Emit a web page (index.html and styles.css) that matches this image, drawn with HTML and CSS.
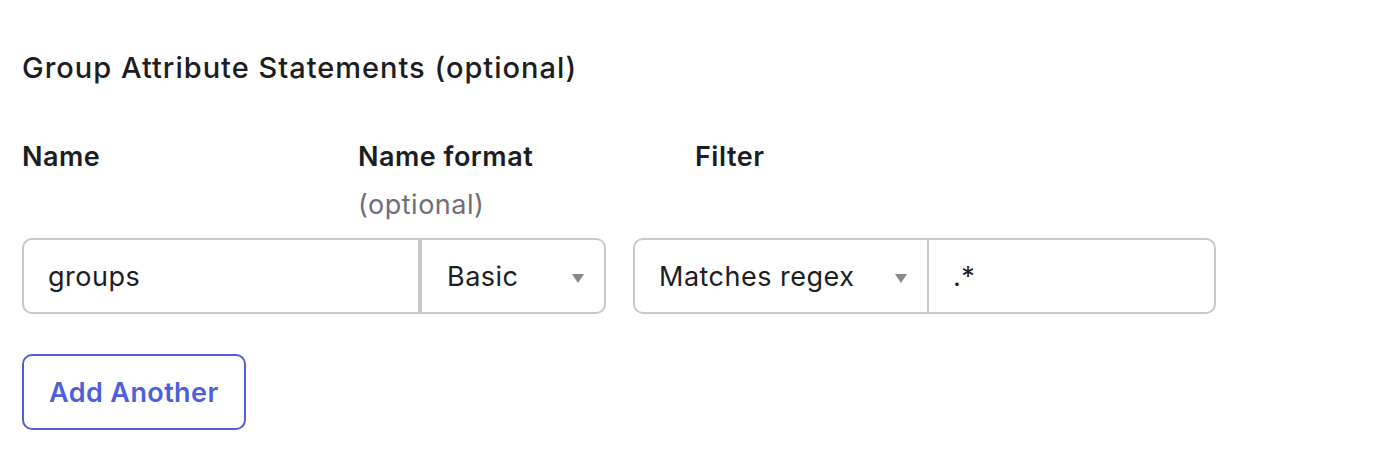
FILE: index.html
```html
<!DOCTYPE html>
<html>
<head>
<meta charset="utf-8">
<link rel="stylesheet" href="styles.css">
</head>
<body>
<section class="panel">
  <h2 class="title">Group Attribute Statements (optional)</h2>
  <div class="labels">
    <div class="label">Name</div>
    <div class="label">Name format<span class="hint">(optional)</span></div>
    <div class="label">Filter</div>
  </div>
  <div class="row">
    <div class="group group-name">
      <div class="field text-field name-input">groups</div>
      <div class="field select basic-select">Basic<span class="caret"></span></div>
    </div>
    <div class="group group-filter">
      <div class="field select filter-select">Matches regex<span class="caret"></span></div>
      <div class="field text-field value-input">.*</div>
    </div>
  </div>
  <button class="add-btn">Add Another</button>
</section>
</body>
</html>
```
FILE: styles.css
```css
* { box-sizing: border-box; }
html, body { margin: 0; padding: 0; background: #fff; }
body {
  font-family: Inter, "Noto Sans", sans-serif;
  color: #1d1d21;
}
.panel {
  padding: 50px 22px 0 22px;
  display: flex;
  flex-direction: column;
  align-items: flex-start;
}
.title {
  margin: 0;
  font-size: 29px;
  font-weight: 500;
  line-height: 36px;
  letter-spacing: 1px;
}
.labels {
  margin-top: 56px;
  display: grid;
  grid-template-columns: 336px 337px 337px;
}
.label {
  font-size: 27px;
  font-weight: 600;
  line-height: 30px;
  letter-spacing: 0.5px;
  display: flex;
  flex-direction: column;
}
.hint {
  margin-top: 18px;
  font-weight: 400;
  color: #6e6e78;
}
.row {
  margin-top: 18px;
  display: flex;
  gap: 27px;
}
.group {
  display: flex;
  height: 76px;
}
.field {
  height: 76px;
  border: 2px solid #c8c8cc;
  display: flex;
  align-items: center;
  font-size: 27px;
  letter-spacing: 0.5px;
  color: #1d1d21;
  background: #fff;
}
.name-input {
  width: 398px;
  padding-left: 24px;
  border-radius: 10px 0 0 10px;
}
.basic-select {
  width: 186px;
  padding-left: 25px;
  padding-right: 20px;
  border-radius: 0 10px 10px 0;
  justify-content: space-between;
}
.filter-select {
  width: 294px;
  padding-left: 24px;
  padding-right: 20px;
  border-radius: 10px 0 0 10px;
  border-right: none;
  justify-content: space-between;
}
.value-input {
  width: 289px;
  padding-left: 24px;
  border-radius: 0 10px 10px 0;
}
.caret {
  width: 0;
  height: 0;
  margin-top: 4px;
  border-left: 6px solid transparent;
  border-right: 6px solid transparent;
  border-top: 9px solid #888;
}
.add-btn {
  margin-top: 40px;
  height: 76px;
  padding: 0 25px;
  border: 2px solid #4f5fdc;
  border-radius: 10px;
  background: #fff;
  color: #4f5fdc;
  font-family: Inter, "Noto Sans", sans-serif;
  font-size: 27px;
  font-weight: 600;
  letter-spacing: 0.4px;
}
```
